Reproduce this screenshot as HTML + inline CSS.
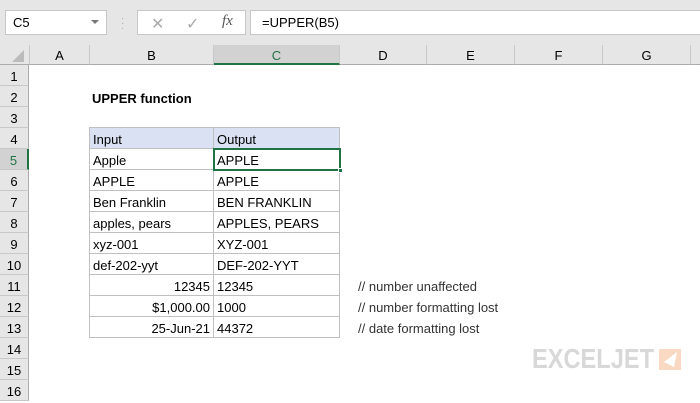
<!DOCTYPE html>
<html><head><style>
*{margin:0;padding:0;box-sizing:border-box}
body{width:700px;height:400px;overflow:hidden;background:#fff;font-family:"Liberation Sans",sans-serif;font-size:13px;color:#000;position:relative}
.a{position:absolute}
.top{left:0;top:0;width:700px;height:45px;background:#e6e6e6}
.box{background:#fff;border:1px solid #c6c6c6}
.colh{top:45px;height:20px;background:#e6e6e6;border-right:1px solid #c8c8c8;border-bottom:1px solid #ababab;text-align:center;line-height:21px;font-size:13px}
.rowh{left:0;width:29px;height:21px;background:#e6e6e6;border-bottom:1px solid #c8c8c8;border-right:1px solid #ababab;text-align:center;line-height:23px;font-size:13px}
.c{height:21px;line-height:23px;padding:0 3px;border-right:1px solid #c0c0c0;border-bottom:1px solid #c0c0c0;white-space:nowrap}
.r{text-align:right}
.note{left:358px;height:21px;line-height:23px;color:#333}
</style></head><body>
<div class="a top"></div>
<div class="a box" style="left:5px;top:10px;width:102px;height:25px;line-height:24px;padding-left:7px">C5</div>
<div class="a" style="left:91px;top:20px;width:0;height:0;border-left:4px solid transparent;border-right:4px solid transparent;border-top:4px solid #777"></div>
<div class="a" style="left:121px;top:16px;color:#aaa;font-size:10px;line-height:5px">·<br>·<br>·</div>
<div class="a box" style="left:137px;top:10px;width:109px;height:25px"></div>
<div class="a" style="left:151px;top:14px;color:#aaa;font-size:16px">✕</div>
<div class="a" style="left:186px;top:14px;color:#aaa;font-size:16px">✓</div>
<div class="a" style="left:222px;top:13px;color:#555;font-family:'Liberation Serif',serif;font-style:italic;font-size:15px">fx</div>
<div class="a box" style="left:250px;top:10px;width:460px;height:25px;line-height:24px;padding-left:11px">=UPPER(B5)</div>
<div class="a" style="left:0;top:45px;width:30px;height:20px;background:#e6e6e6;border-right:1px solid #c8c8c8;border-bottom:1px solid #ababab"></div>
<div class="a" style="left:12px;top:50px;width:0;height:0;border-left:12px solid transparent;border-bottom:12px solid #bbb"></div>
<div class="a colh" style="left:30px;width:60px">A</div>
<div class="a colh" style="left:90px;width:124px">B</div>
<div class="a colh" style="left:214px;width:126px;background:#d2d2d2;border-bottom:2px solid #217346;color:#217346">C</div>
<div class="a colh" style="left:340px;width:87px">D</div>
<div class="a colh" style="left:427px;width:88px">E</div>
<div class="a colh" style="left:515px;width:88px">F</div>
<div class="a colh" style="left:603px;width:88px">G</div>
<div class="a colh" style="left:691px;width:20px"></div>
<div class="a rowh" style="top:65px">1</div>
<div class="a rowh" style="top:86px">2</div>
<div class="a rowh" style="top:107px">3</div>
<div class="a rowh" style="top:128px">4</div>
<div class="a rowh" style="top:149px;background:#d2d2d2;border-right:2px solid #217346;color:#217346">5</div>
<div class="a rowh" style="top:170px">6</div>
<div class="a rowh" style="top:191px">7</div>
<div class="a rowh" style="top:212px">8</div>
<div class="a rowh" style="top:233px">9</div>
<div class="a rowh" style="top:254px">10</div>
<div class="a rowh" style="top:275px">11</div>
<div class="a rowh" style="top:296px">12</div>
<div class="a rowh" style="top:317px">13</div>
<div class="a rowh" style="top:338px">14</div>
<div class="a rowh" style="top:359px">15</div>
<div class="a rowh" style="top:380px">16</div>
<div class="a" style="left:92px;top:87px;line-height:23px;font-weight:bold">UPPER function</div>
<div class="a" style="left:89px;top:127px;width:251px;height:211px;border-left:1px solid #c0c0c0;border-top:1px solid #c0c0c0"></div>
<div class="a" style="left:90px;top:128px;width:250px">
<div style="display:grid;grid-template-columns:124px 126px">
<div class="c" style="background:#d9e1f2">Input</div><div class="c" style="background:#d9e1f2">Output</div>
<div class="c">Apple</div><div class="c">APPLE</div>
<div class="c">APPLE</div><div class="c">APPLE</div>
<div class="c">Ben Franklin</div><div class="c">BEN FRANKLIN</div>
<div class="c">apples, pears</div><div class="c">APPLES, PEARS</div>
<div class="c">xyz-001</div><div class="c">XYZ-001</div>
<div class="c">def-202-yyt</div><div class="c">DEF-202-YYT</div>
<div class="c r">12345</div><div class="c">12345</div>
<div class="c r">$1,000.00</div><div class="c">1000</div>
<div class="c r">25-Jun-21</div><div class="c">44372</div>
</div></div>
<div class="a" style="left:213px;top:148px;width:128px;height:23px;border:2px solid #217346"></div>
<div class="a" style="left:338px;top:168px;width:5px;height:5px;background:#217346;border:1px solid #fff"></div>
<div class="a note" style="top:275px">// number unaffected</div>
<div class="a note" style="top:296px">// number formatting lost</div>
<div class="a note" style="top:317px">// date formatting lost</div>
<svg class="a" style="left:530px;top:340px" width="160" height="40">
<text x="2" y="28" font-family="Liberation Sans, sans-serif" font-weight="bold" font-size="28" fill="#d8d8d8" textLength="122" lengthAdjust="spacingAndGlyphs">EXCELJET</text>
<rect x="129" y="9" width="22" height="21" fill="#f9d9c2"/>
<polygon points="147,12 134,22 144,27" fill="#fff"/>
</svg>
</body></html>
